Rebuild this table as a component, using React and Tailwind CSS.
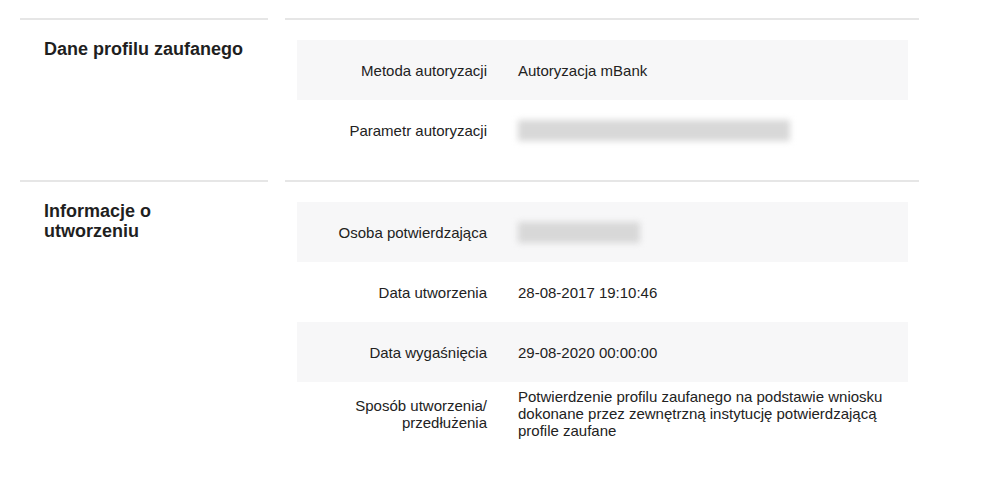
import React from "react";

const Blur = ({ w }) => (
  <div className="py-[2px]">
    <div className={`${w} h-[21px] bg-[#d8d8d8] blur-[3px]`} />
  </div>
);

const Row = ({ label, children, gray }) => (
  <div
    className={`flex items-center min-h-[60px] py-[6px] ${
      gray ? "bg-[#f7f7f8]" : "bg-white"
    }`}
  >
    <div className="w-[190px] shrink-0 text-right">{label}</div>
    <div className="flex-1 pl-[31px] pr-[12px]">{children}</div>
  </div>
);

const Section = ({ title, children }) => (
  <div className="flex gap-[17px]">
    <div className="w-[248px] shrink-0 border-t-2 border-[#e6e6e6] pl-[24px] pt-[19px]">
      <h2 className="text-[18px] leading-[20px] font-bold text-[#1f1f1f]">
        {title}
      </h2>
    </div>
    <div className="flex-1 border-t-2 border-[#e6e6e6] pl-[12px] pr-[11px] pt-[20px] pb-[20px]">
      {children}
    </div>
  </div>
);

export default function App() {
  return (
    <div
      className="w-[993px] h-[490px] bg-white text-[15px] leading-[17px] text-[#222]"
      style={{ fontFamily: '"Liberation Sans", Arial, sans-serif' }}
    >
      <div className="ml-[20px] w-[899px] pt-[18px]">
        <Section title="Dane profilu zaufanego">
          <Row label="Metoda autoryzacji" gray>
            Autoryzacja mBank
          </Row>
          <Row label="Parametr autoryzacji">
            <Blur w="w-[272px]" />
          </Row>
        </Section>

        <Section
          title={
            <>
              Informacje o<br />
              utworzeniu
            </>
          }
        >
          <Row label="Osoba potwierdzająca" gray>
            <Blur w="w-[122px]" />
          </Row>
          <Row label="Data utworzenia">28-08-2017 19:10:46</Row>
          <Row label="Data wygaśnięcia" gray>
            29-08-2020 00:00:00
          </Row>
          <Row
            label={
              <>
                Sposób utworzenia/
                <br />
                przedłużenia
              </>
            }
          >
            Potwierdzenie profilu zaufanego na podstawie wniosku dokonane przez
            zewnętrzną instytucję potwierdzającą profile zaufane
          </Row>
        </Section>
      </div>
    </div>
  );
}
